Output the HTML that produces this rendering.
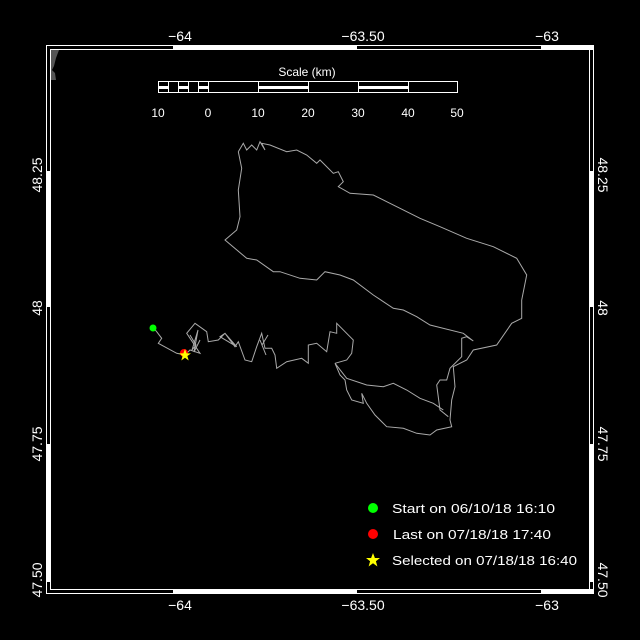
<!DOCTYPE html>
<html><head><meta charset="utf-8"><style>
html,body{margin:0;padding:0;background:#000;}
svg{display:block;}
text{font-family:"Liberation Sans",sans-serif;fill:#fff;}
</style></head><body>
<svg width="640" height="640" viewBox="0 0 640 640" xmlns="http://www.w3.org/2000/svg">
<rect width="640" height="640" fill="#000"/>
<!-- land -->
<polygon points="51,50 59,50 56,58 54,66 52,70 55,73 56,80 51,80" fill="#555"/>
<!-- frame -->
<g fill="#fff">
<rect x="173" y="45" width="184" height="5"/>
<rect x="541" y="45" width="53" height="5"/>
<rect x="173" y="589" width="184" height="5"/>
<rect x="541" y="589" width="53" height="5"/>
<rect x="46" y="171" width="5" height="136"/>
<rect x="46" y="444" width="5" height="138"/>
<rect x="589" y="171" width="5" height="136"/>
<rect x="589" y="444" width="5" height="138"/>
</g>
<g fill="none" stroke="#fff" stroke-width="1">
<rect x="46.5" y="45.5" width="547" height="548"/>
<rect x="50.5" y="49.5" width="539" height="540"/>
</g>
<!-- axis labels -->
<g font-size="14" text-anchor="middle">
<text x="180" y="41">−64</text>
<text x="363" y="41">−63.50</text>
<text x="547" y="41">−63</text>
<text x="180" y="610">−64</text>
<text x="363" y="610">−63.50</text>
<text x="547" y="610">−63</text>
<text transform="translate(42,175) rotate(-90)">48.25</text>
<text transform="translate(42,308) rotate(-90)">48</text>
<text transform="translate(42,444) rotate(-90)">47.75</text>
<text transform="translate(42,580) rotate(-90)">47.50</text>
<text transform="translate(598,175) rotate(90)">48.25</text>
<text transform="translate(598,308) rotate(90)">48</text>
<text transform="translate(598,444) rotate(90)">47.75</text>
<text transform="translate(598,580) rotate(90)">47.50</text>
</g>
<!-- scale bar -->
<g>
<text x="307" y="76" font-size="12" text-anchor="middle">Scale (km)</text>
<rect x="158.5" y="81.5" width="299" height="11" fill="none" stroke="#fff"/>
<g stroke="#fff"><line x1="168.5" y1="81" x2="168.5" y2="93"/><line x1="178.5" y1="81" x2="178.5" y2="93"/><line x1="188.5" y1="81" x2="188.5" y2="93"/><line x1="198.5" y1="81" x2="198.5" y2="93"/><line x1="208.5" y1="81" x2="208.5" y2="93"/><line x1="258.5" y1="81" x2="258.5" y2="93"/><line x1="308.5" y1="81" x2="308.5" y2="93"/><line x1="358.5" y1="81" x2="358.5" y2="93"/><line x1="408.5" y1="81" x2="408.5" y2="93"/></g>
<g fill="#fff"><rect x="158" y="86" width="10" height="3"/><rect x="178" y="86" width="10" height="3"/><rect x="198" y="86" width="10" height="3"/><rect x="258" y="86" width="50" height="3"/><rect x="358" y="86" width="50" height="3"/></g>
<g font-size="12" text-anchor="middle">
<text x="158" y="117">10</text><text x="208" y="117">0</text><text x="258" y="117">10</text><text x="308" y="117">20</text><text x="358" y="117">30</text><text x="408" y="117">40</text><text x="457" y="117">50</text>
</g>
</g>
<!-- track -->
<g fill="none" stroke="#aaa" stroke-width="1">
<polyline points="238.3,151.7 243.3,143.3 246.7,150 251.7,145 256.7,150 260,141.7 265,150 261.7,143.3 270,145 286.7,151.7 296.7,150 306.7,155 316.7,163.3 320,160 333.3,173.3 338.3,171.7 343.3,181.7 338.3,186.7 350,193.3 373.3,195 386.7,201.7 400,208.3 420,218.3 440,226.7 466.7,238.3 493.3,246.7 516.7,258.3 526.7,275 521.7,300 521.7,318.3 511.7,323.3 496.7,345 473.3,350 466.7,360 453.3,366.7 455,386.7 451.7,400 450,420 451.7,426.7 436.7,430 430,435 416.7,433.3 403.3,428.3 386.7,426.7 375,415 366.7,403.3 361.7,393.3 363.3,403.3 351.7,400 346.7,390 345,380 340,375 335,363.3"/>
<polyline points="238.3,151.7 241.7,168.3 238.3,190 240,216.7 236.7,230 225,240 246.7,258.3 256.7,260 273.3,271.7 280,271.7 300,278.3 316.7,280 325,271.7 340,275 353.3,280 373.3,295 393.3,308.3 403.3,310 416.7,316.7 430,325 463.3,333.3 473.3,341 466.7,336.7 461.7,338.3 461.7,356.7 453.3,365 450,368.3 446.7,380 440,380 436.7,385 440,410 448.3,416.7"/>
<polyline points="335,363.3 346.7,378.3 366.7,385 383.3,386.7 393.3,383.3 406.7,390 420,398.3 433.3,403.3 443.3,410"/>
<polyline points="335,363.3 346.7,360 351.7,353.3 353.3,340 336.7,323.3 336.7,333.3 330,331.7 326.7,351.7 316.7,343.3 308.3,345 308.3,363.3 301.7,358.3 286.7,361.7 276.7,368.3 275,355 271.7,348.3 265,348.3 261.7,333.3 256.7,346.7 251.7,361.7 245,360 238.3,341.7 235,346.7 225,333.3 220,336.7 236.7,346.7 225,333.3 218.3,340 208.3,341.7 206.7,331.7 195,323.3 186.7,333.3 200,353.3 190,350 185,355 176.7,353.3 158.3,343.3 161.7,338.3 156.7,331.7 153.3,327.7"/>
<polyline points="190,335 196,345 192,350 198,330 194,352 200,340"/>
<polyline points="260,340 266,355 262,345 268,335"/>
</g>
<circle cx="153" cy="328" r="3.5" fill="#0f0"/>
<circle cx="184" cy="353" r="4" fill="#f00"/>
<polygon points="185,349 186.6,353.4 191,353.4 187.4,356 188.7,360.5 185,357.7 181.3,360.5 182.6,356 179,353.4 183.4,353.4" fill="#ff0"/>
<!-- legend -->
<circle cx="373" cy="508" r="5" fill="#0f0"/>
<circle cx="373" cy="534" r="5" fill="#f00"/>
<polygon points="373,553 374.9,558 380,558 375.9,561.2 377.4,566.5 373,563.3 368.6,566.5 370.1,561.2 366,558 371.1,558" fill="#ff0"/>
<g font-size="13">
<text x="392" y="513" textLength="163" lengthAdjust="spacingAndGlyphs">Start on 06/10/18 16:10</text>
<text x="393" y="539" textLength="158" lengthAdjust="spacingAndGlyphs">Last on 07/18/18 17:40</text>
<text x="392" y="565" textLength="185" lengthAdjust="spacingAndGlyphs">Selected on 07/18/18 16:40</text>
</g>
</svg>
</body></html>
